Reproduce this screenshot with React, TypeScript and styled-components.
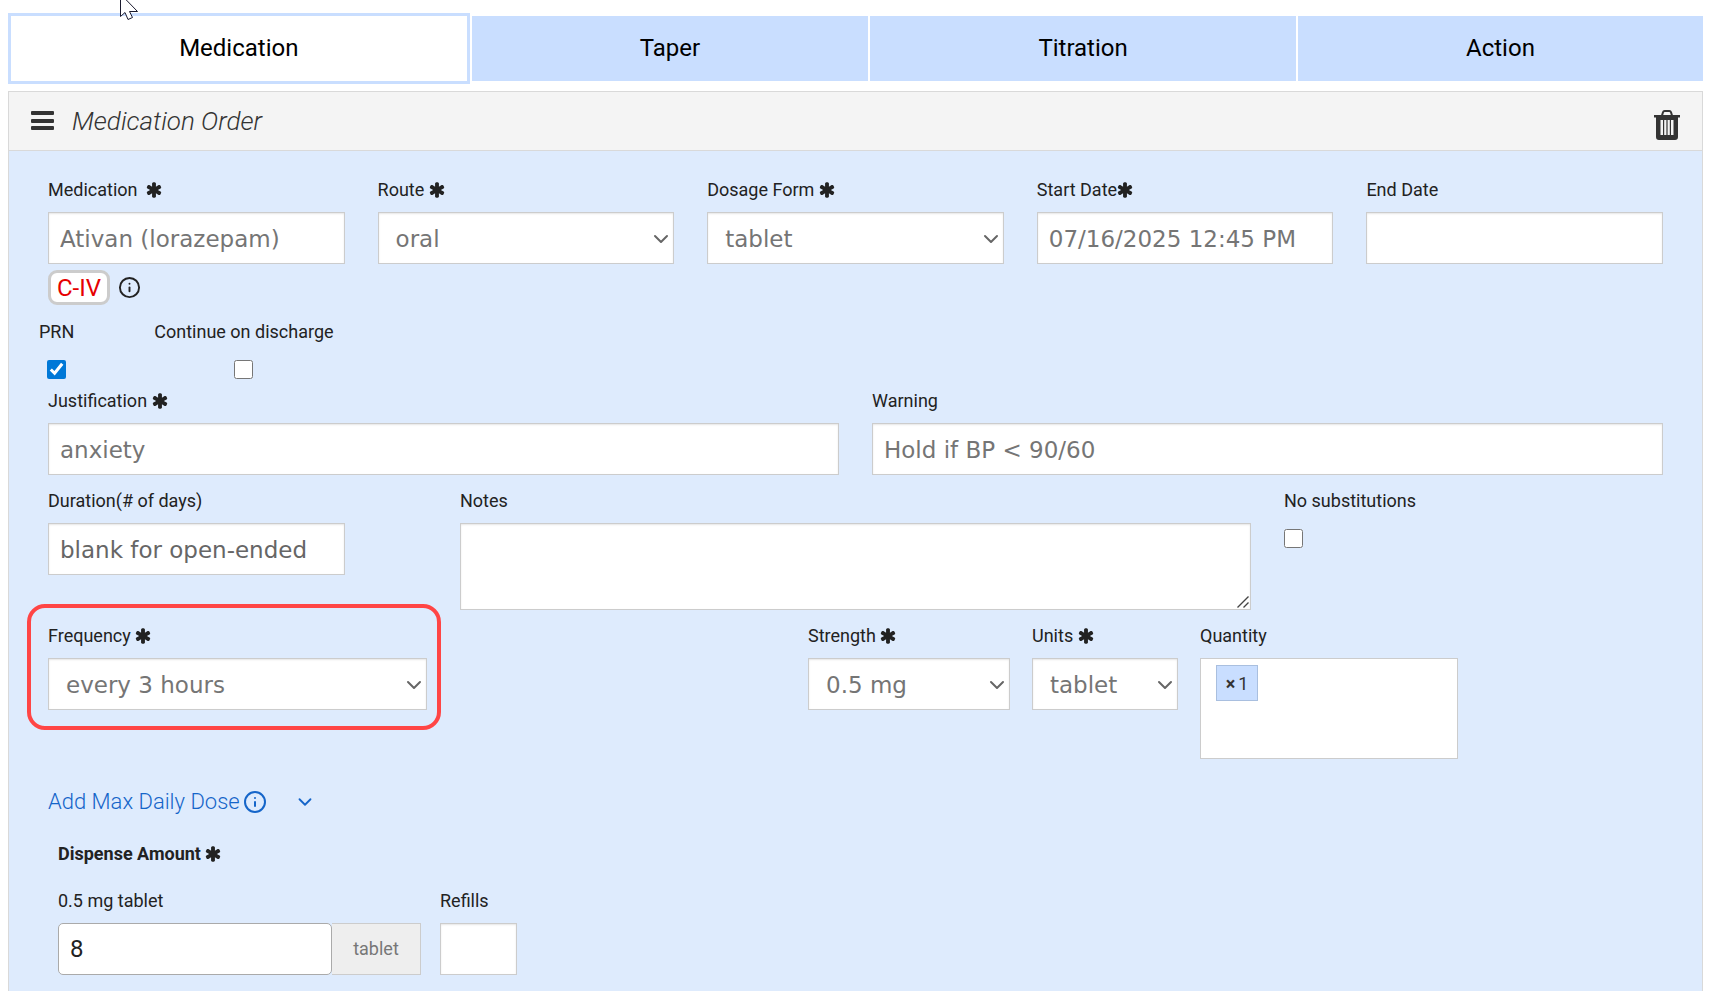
import React, { useState } from 'react';
import styled, { createGlobalStyle, css } from 'styled-components';
import { ChevronDown, Info } from 'lucide-react';

const GlobalStyle = createGlobalStyle`
  *, *::before, *::after { box-sizing: border-box; }
  body {
    margin: 0;
    background: #ffffff;
    color: #222222;
    font-family: Roboto, "Liberation Sans", sans-serif;
    font-size: 18px;
  }
  button, input, select, textarea { font-family: inherit; margin: 0; }
`;

const Page = styled.main`
  position: relative;
  display: flex;
  flex-direction: column;
  min-height: 100vh;
  padding: 13px 7px 0 8px;
`;

const Tabs = styled.nav`
  display: flex;
  align-items: center;
  gap: 2px;
  margin-bottom: 7px;
`;

const Tab = styled.button<{ $active?: boolean }>`
  flex: 1 1 auto;
  height: ${(p) => (p.$active ? '71px' : '65px')};
  padding: 0 0 2px;
  border: ${(p) => (p.$active ? '3px solid #c9deff' : '0')};
  background: ${(p) => (p.$active ? '#ffffff' : '#c9deff')};
  color: #000000;
  font-size: 24px;
  cursor: pointer;
`;

const Panel = styled.section`
  display: flex;
  flex-direction: column;
  flex: 1;
  border: 1px solid #d9d9d9;
  border-bottom: 0;
`;

const PanelHeader = styled.header`
  display: flex;
  align-items: center;
  gap: 18px;
  height: 59px;
  padding: 0 22px;
  border-bottom: 1px solid #d9d9d9;
  background: #f4f4f4;
  color: #333333;
`;

const PanelTitle = styled.h1`
  flex: 1;
  margin: 0;
  font-size: 26px;
  font-style: italic;
  font-weight: 300;
`;

const IconButton = styled.button`
  display: flex;
  padding: 0;
  border: 0;
  background: none;
  color: inherit;
  cursor: pointer;
`;

const DeleteButton = styled(IconButton)`
  padding-top: 8px;
`;

const PanelBody = styled.form`
  flex: 1;
  padding: 23px 39px 16px;
  background: #deebfd;
`;

const FiveColumns = styled.div`
  display: grid;
  grid-template-columns: repeat(5, minmax(0, 1fr));
  gap: 33px;
`;

const TwelveColumns = styled.div`
  display: grid;
  grid-template-columns: repeat(12, minmax(0, 1fr));
  column-gap: 33px;
  margin-bottom: 10px;
`;

const DoseRow = styled.div`
  display: grid;
  grid-template-columns: 379fr 337fr 202fr 146fr 258fr 183fr;
  column-gap: 22px;
  align-items: start;
`;

const Field = styled.div<{ $span?: number; $column?: number }>`
  position: relative;
  display: flex;
  flex-direction: column;
  min-width: 0;
  ${(p) => p.$span && css`grid-column: span ${p.$span};`}
  ${(p) => p.$column && css`grid-column: ${p.$column};`}
`;

const labelText = css`
  line-height: 32px;
  white-space: pre;
`;

const Label = styled.label`
  ${labelText}
  display: flex;
  align-items: center;
  margin-bottom: 6px;
`;

const RequiredMark = styled.svg`
  margin-left: -1px;
`;

const controlFrame = css`
  width: 100%;
  border: 1px solid #cccccc;
  border-radius: 0;
  background: #ffffff;
  box-shadow: inset 0 1px 2px rgba(0, 0, 0, 0.1);
  color: #757575;
  font-family: "DejaVu Sans", Verdana, sans-serif;
  font-size: 23px;
`;

const TextInput = styled.input<{ $narrow?: boolean }>`
  ${controlFrame}
  ${(p) => p.$narrow && css`width: 297px; max-width: 100%;`}
  height: 52px;
  padding: 2px 11px 0;
  &::placeholder { color: #666666; opacity: 1; }
`;

const NotesFrame = styled.div`
  position: relative;
  svg {
    position: absolute;
    right: 2px;
    bottom: 2px;
    pointer-events: none;
  }
`;

const TextArea = styled.textarea`
  ${controlFrame}
  display: block;
  height: 87px;
  padding: 10px;
  resize: both;
  &::-webkit-resizer { background: transparent; }
`;

const SelectFrame = styled.div`
  position: relative;
  svg {
    position: absolute;
    top: 15px;
    right: 1px;
    color: #666666;
    pointer-events: none;
  }
`;

const SelectInput = styled.select`
  ${controlFrame}
  display: block;
  height: 52px;
  padding: 2px 26px 0 17px;
  appearance: none;
`;

const ScheduleRow = styled.div`
  display: flex;
  align-items: center;
  gap: 8px;
  margin-top: 6px;
`;

const ScheduleBadge = styled.span`
  height: 35px;
  padding: 0 6px;
  border: 3px solid #cccccc;
  border-radius: 9px;
  background: #ffffff;
  color: #e60000;
  font-size: 24px;
  line-height: 30px;
`;

const CheckRow = styled.div`
  display: flex;
  gap: 80px;
  margin: 11px 0 6px -9px;
`;

const CheckField = styled.div<{ $centered?: boolean }>`
  display: flex;
  flex-direction: column;
  align-items: ${(p) => (p.$centered ? 'center' : 'flex-start')};
  gap: 12px;
`;

const CheckLabel = styled.label`
  ${labelText}
`;

const CheckBox = styled.input<{ $indent?: boolean }>`
  width: 19px;
  height: 19px;
  margin-left: ${(p) => (p.$indent ? '8px' : '0')};
  accent-color: #0078d7;
`;

const SubstitutionField = styled(CheckField)`
  grid-column: span 3;
`;

const Highlight = styled.div`
  position: absolute;
  inset: -16px -14px -20px -21px;
  border: 4px solid #ff4545;
  border-radius: 18px;
  pointer-events: none;
`;

const TokenBox = styled.div`
  height: 101px;
  padding: 6px 15px;
  border: 1px solid #cccccc;
  background: #ffffff;
`;

const Token = styled.button`
  display: flex;
  align-items: center;
  justify-content: center;
  gap: 3px;
  width: 42px;
  height: 36px;
  padding: 0;
  border: 1px solid #a9bfdf;
  background: #c9deff;
  color: #333333;
  font-size: 18px;
`;

const MaxDose = styled.a`
  display: inline-flex;
  align-items: center;
  gap: 3px;
  margin-top: 27px;
  color: #1565c9;
  font-size: 22px;
  font-weight: 300;
  line-height: 32px;
  text-decoration: none;
  vertical-align: top;
`;

const MaxDoseChevron = styled(ChevronDown)`
  margin-left: 24px;
`;

const Dispense = styled.section`
  margin: 20px 10px 0;
`;

const DispenseTitle = styled.h2`
  ${labelText}
  display: flex;
  align-items: center;
  margin: 0 0 15px;
  font-size: 18px;
  font-weight: 700;
`;

const DispenseRow = styled.div`
  display: flex;
  gap: 19px;
`;

const AmountGroup = styled.div`
  display: flex;
`;

const AmountInput = styled.input`
  width: 274px;
  height: 52px;
  padding: 0 11px;
  border: 1px solid #aaaaaa;
  border-radius: 5px;
  background: #ffffff;
  color: #222222;
  font-size: 24px;
`;

const AmountUnit = styled.span`
  width: 89px;
  height: 52px;
  border: 1px solid #cccccc;
  border-left: 0;
  background: #eeeeee;
  color: #777777;
  line-height: 50px;
  text-align: center;
`;

const RefillsField = styled(Field)`
  width: 77px;
`;

const Cursor = styled.svg`
  position: absolute;
  top: 0;
  left: 119px;
  pointer-events: none;
`;

const Required = () => (
  <RequiredMark width="18" height="18" viewBox="0 0 1792 1792" fill="currentColor" aria-label="required">
    <path
      transform="translate(64 0)"
      d="M1482 1050q46 26 59.500 77.500t-12.500 97.500l-64 110q-26 46-77.500 59.500t-97.500-12.500l-266-153v307q0 52-38 90t-90 38h-128q-52 0-90-38t-38-90v-307l-266 153q-46 26-97.500 12.500t-77.500-59.500l-64-110q-26-46-12.500-97.500t59.500-77.500l266-154-266-154q-46-26-59.500-77.500t12.500-97.500l64-110q26-46 77.500-59.500t97.500 12.500l266 153v-307q0-52 38-90t90-38h128q52 0 90 38t38 90v307l266-153q46-26 97.500-12.500t77.500 59.500l64 110q26 46 12.500 97.500t-59.500 77.500l-266 154z"
    />
  </RequiredMark>
);

const MenuIcon = () => (
  <svg width="23" height="20" viewBox="0 0 23 20" fill="currentColor" aria-hidden="true">
    <rect width="23" height="4" rx="1" />
    <rect y="8" width="23" height="4" rx="1" />
    <rect y="15" width="23" height="4" rx="1" />
  </svg>
);

const TrashIcon = () => (
  <svg width="26" height="30" viewBox="0 0 26 30" aria-hidden="true">
    <path d="M8 5.500L9 2.200Q9.400 1 10.600 1h4.800q1.200 0 1.600 1.200l1 3.300" fill="none" stroke="#333333" strokeWidth="2" />
    <path d="M0 5h26v2.500h-2V27q0 3-3 3H5q-3 0-3-3V7.500H0z" fill="#333333" />
    <path d="M6.500 10h2.500v15H6.500zM10.200 10h2.200v15h-2.200zM13.600 10h2.200v15h-2.200zM17 10h2.500v15H17z" fill="#f4f4f4" />
  </svg>
);

type SelectFieldProps = { id: string; label: string; value: string; column?: number; highlighted?: boolean };

const SelectField = ({ id, label, value, column, highlighted }: SelectFieldProps) => (
  <Field $column={column}>
    <Label htmlFor={id}>{label}<Required /></Label>
    <SelectFrame>
      <SelectInput id={id} defaultValue={value}>
        <option>{value}</option>
      </SelectInput>
      <ChevronDown size={24} aria-hidden="true" />
    </SelectFrame>
    {highlighted && <Highlight />}
  </Field>
);

const tabNames = ['Medication', 'Taper', 'Titration', 'Action'];

export default function App() {
  const [tab, setTab] = useState('Medication');
  return (
    <Page>
      <GlobalStyle />
      <Tabs>
        {tabNames.map((name) => (
          <Tab key={name} type="button" $active={name === tab} onClick={() => setTab(name)}>
            {name}
          </Tab>
        ))}
      </Tabs>

      <Panel>
        <PanelHeader>
          <IconButton type="button" aria-label="Menu"><MenuIcon /></IconButton>
          <PanelTitle>Medication Order</PanelTitle>
          <DeleteButton type="button" aria-label="Delete order"><TrashIcon /></DeleteButton>
        </PanelHeader>

        <PanelBody>
          <FiveColumns>
            <Field>
              <Label htmlFor="medication">{'Medication  '}<Required /></Label>
              <TextInput id="medication" defaultValue="Ativan (lorazepam)" />
            </Field>
            <SelectField id="route" label="Route " value="oral" />
            <SelectField id="form" label="Dosage Form " value="tablet" />
            <Field>
              <Label htmlFor="start">Start Date<Required /></Label>
              <TextInput id="start" defaultValue="07/16/2025 12:45 PM" />
            </Field>
            <Field>
              <Label htmlFor="end">End Date</Label>
              <TextInput id="end" />
            </Field>
          </FiveColumns>

          <ScheduleRow>
            <ScheduleBadge>C-IV</ScheduleBadge>
            <IconButton type="button" aria-label="Schedule information"><Info size={23} /></IconButton>
          </ScheduleRow>

          <CheckRow>
            <CheckField>
              <CheckLabel htmlFor="prn">PRN</CheckLabel>
              <CheckBox id="prn" type="checkbox" defaultChecked $indent />
            </CheckField>
            <CheckField $centered>
              <CheckLabel htmlFor="discharge">Continue on discharge</CheckLabel>
              <CheckBox id="discharge" type="checkbox" />
            </CheckField>
          </CheckRow>

          <TwelveColumns>
            <Field $span={6}>
              <Label htmlFor="justification">{'Justification '}<Required /></Label>
              <TextInput id="justification" defaultValue="anxiety" />
            </Field>
            <Field $span={6}>
              <Label htmlFor="warning">Warning</Label>
              <TextInput id="warning" defaultValue="Hold if BP < 90/60" />
            </Field>
          </TwelveColumns>

          <TwelveColumns>
            <Field $span={3}>
              <Label htmlFor="duration">Duration(# of days)</Label>
              <TextInput id="duration" placeholder="blank for open-ended" $narrow />
            </Field>
            <Field $span={6}>
              <Label htmlFor="notes">Notes</Label>
              <NotesFrame>
                <TextArea id="notes" />
                <svg width="12" height="12" viewBox="0 0 12 12" stroke="#444444" strokeWidth="1.4" aria-hidden="true">
                  <path d="M0.500 11.500L11.500 0.500M6.500 11.500L11.500 6.500" />
                </svg>
              </NotesFrame>
            </Field>
            <SubstitutionField>
              <CheckLabel htmlFor="substitutions">No substitutions</CheckLabel>
              <CheckBox id="substitutions" type="checkbox" />
            </SubstitutionField>
          </TwelveColumns>

          <DoseRow>
            <SelectField id="frequency" label="Frequency " value="every 3 hours" column={1} highlighted />
            <SelectField id="strength" label="Strength " value="0.5 mg" column={3} />
            <SelectField id="units" label="Units " value="tablet" column={4} />
            <Field $column={5}>
              <Label as="span">Quantity</Label>
              <TokenBox>
                <Token type="button"><b>×</b>1</Token>
              </TokenBox>
            </Field>
          </DoseRow>

          <MaxDose href="#max-daily-dose">
            Add Max Daily Dose
            <Info size={24} aria-hidden="true" />
            <MaxDoseChevron size={22} aria-hidden="true" />
          </MaxDose>

          <Dispense>
            <DispenseTitle>{'Dispense Amount '}<Required /></DispenseTitle>
            <DispenseRow>
              <Field>
                <Label htmlFor="amount">0.5 mg tablet</Label>
                <AmountGroup>
                  <AmountInput id="amount" defaultValue="8" />
                  <AmountUnit>tablet</AmountUnit>
                </AmountGroup>
              </Field>
              <RefillsField>
                <Label htmlFor="refills">Refills</Label>
                <TextInput id="refills" />
              </RefillsField>
            </DispenseRow>
          </Dispense>
        </PanelBody>
      </Panel>

      <Cursor width="20" height="22" viewBox="0 0 20 22" aria-hidden="true">
        <path d="M1.500 -6V16.500L6 12.500L9 19.500L13.500 17.500L10.500 11.500H18.500Z" fill="#ffffff" stroke="#1a1a2e" />
      </Cursor>
    </Page>
  );
}
